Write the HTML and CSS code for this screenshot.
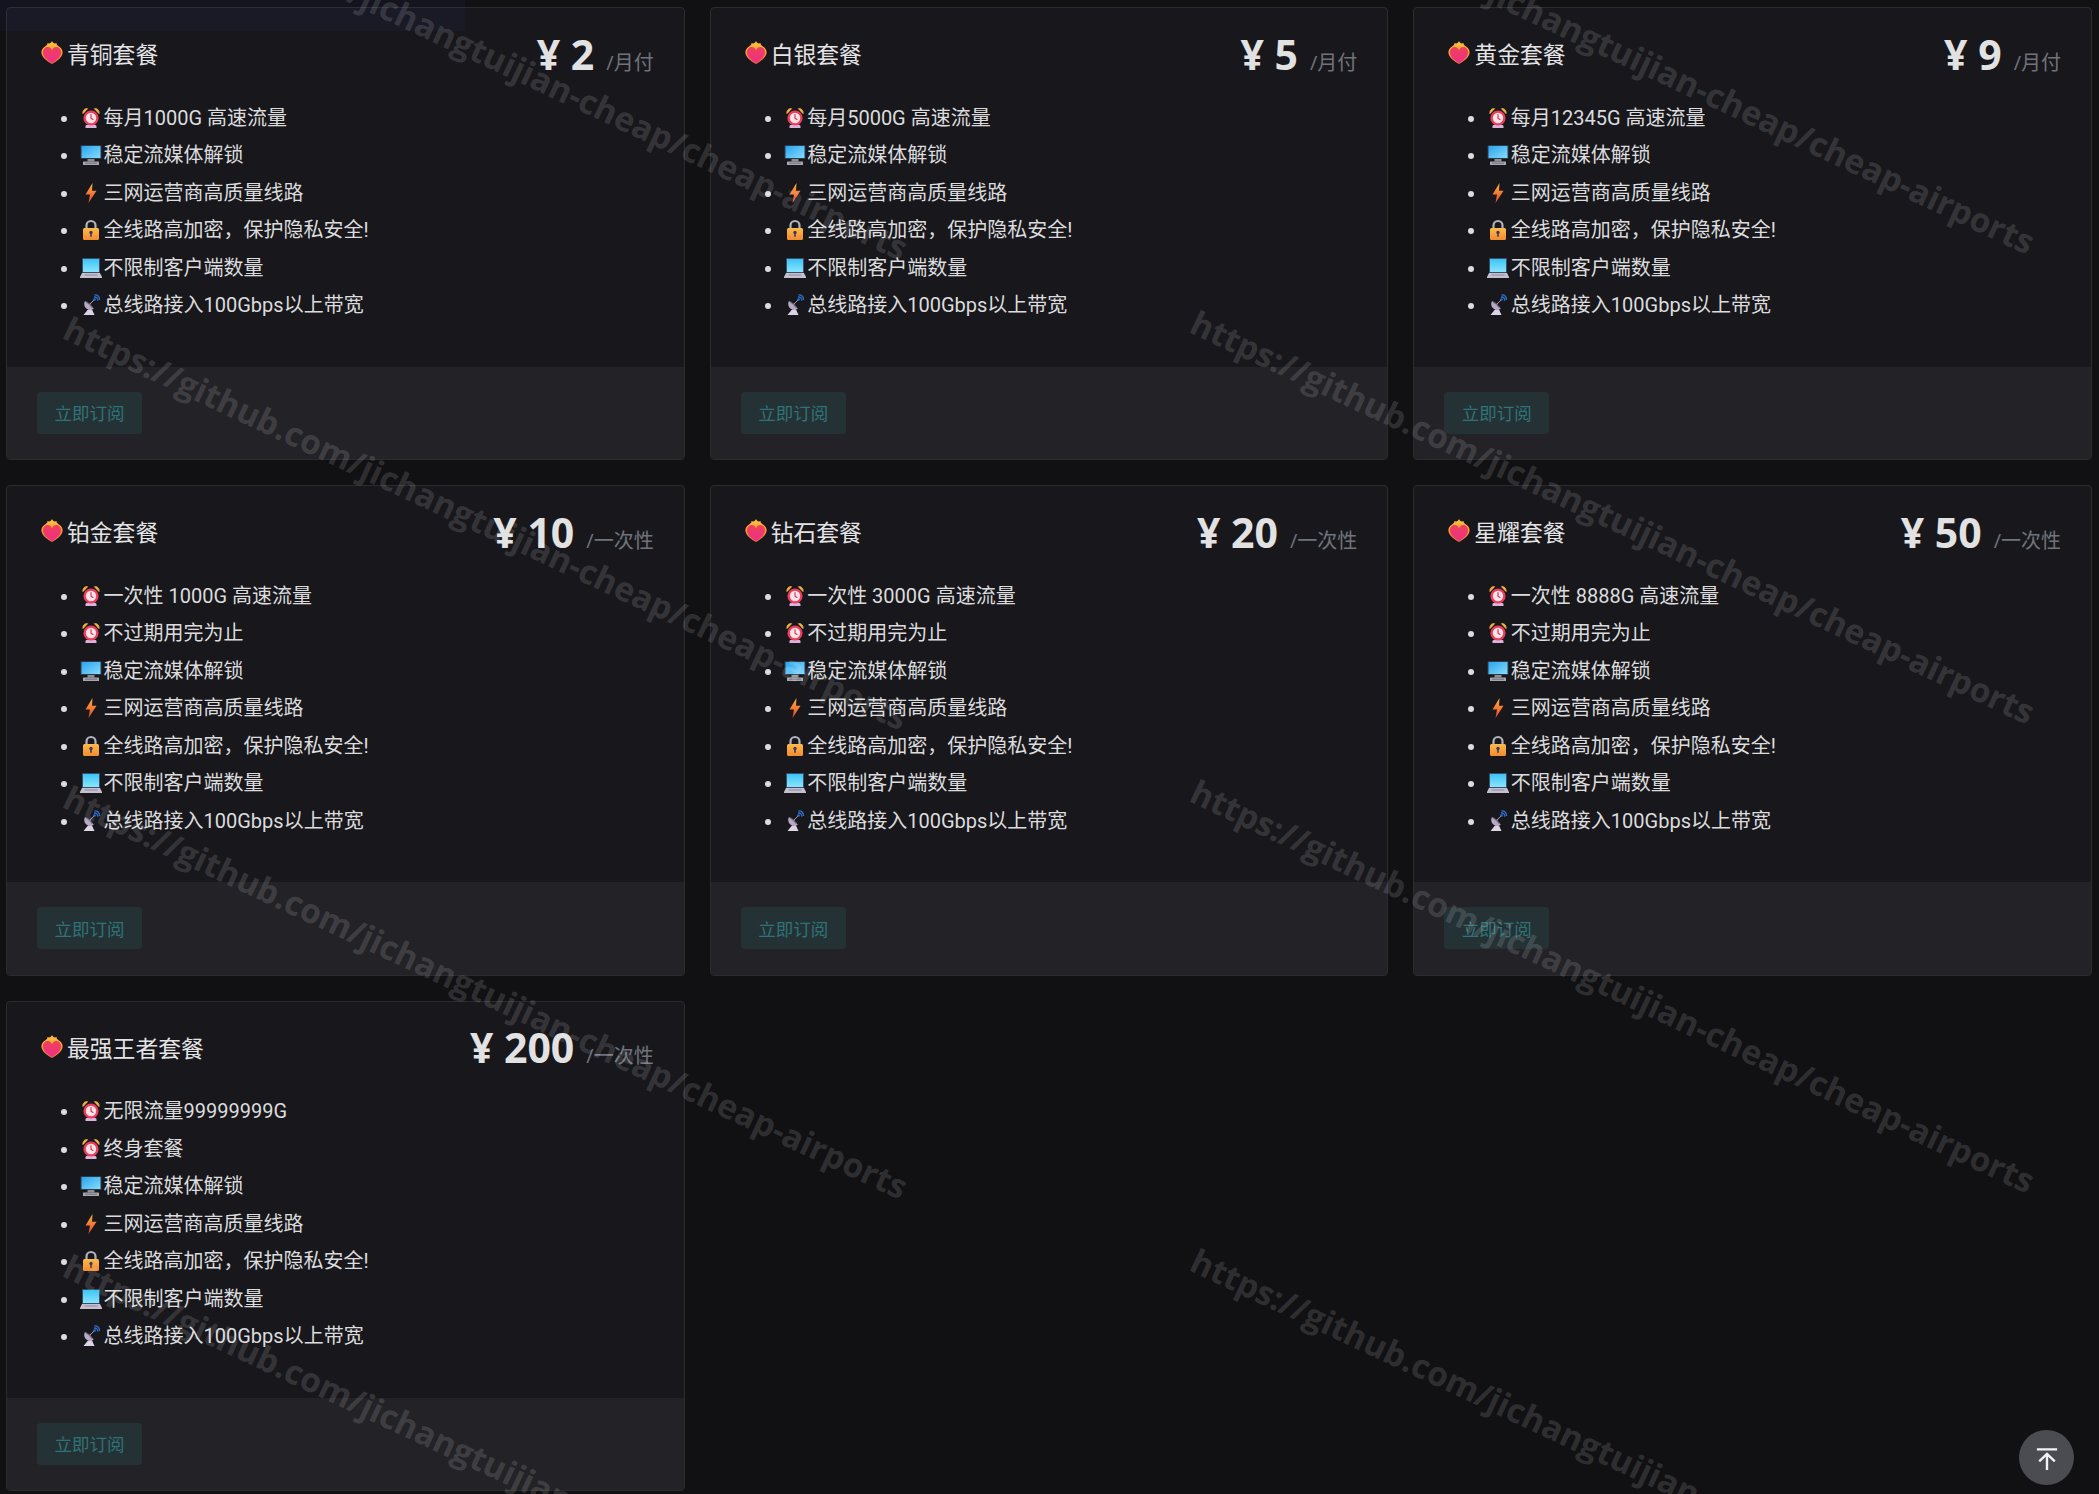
FILE: index.html
```html
<!DOCTYPE html>
<html lang="zh-CN">
<head>
<meta charset="utf-8">
<title>套餐</title>
<link rel="stylesheet" href="styles.css">
</head>
<body>
<svg class="defs" aria-hidden="true">
  <defs>
    <linearGradient id="gHeart" x1="0" y1="0" x2="0" y2="1"><stop offset="0" stop-color="#f0405a"/><stop offset="1" stop-color="#ee2f8a"/></linearGradient>
    <linearGradient id="gFlame" x1="0" y1="0" x2="0" y2="1"><stop offset="0" stop-color="#fdc63f"/><stop offset="1" stop-color="#f2702c"/></linearGradient>
    <linearGradient id="gScreen" x1="0" y1="0" x2="1" y2="1"><stop offset="0" stop-color="#2aa3ee"/><stop offset="1" stop-color="#86dcfb"/></linearGradient>
    <linearGradient id="gLaptop" x1="0" y1="0" x2="0" y2="1"><stop offset="0" stop-color="#3cc4f7"/><stop offset="1" stop-color="#8ae4fc"/></linearGradient>
    <linearGradient id="gBolt" x1="0" y1="0" x2="0" y2="1"><stop offset="0" stop-color="#ffb13c"/><stop offset="1" stop-color="#e8452c"/></linearGradient>
    <linearGradient id="gLock" x1="0" y1="0" x2="0" y2="1"><stop offset="0" stop-color="#fdbb4a"/><stop offset="1" stop-color="#f58a2e"/></linearGradient>
    <symbol id="i-heart" viewBox="0 0 22 25">
      <path d="M11 1C11.800 3 13.500 4 15.500 3C15.500 4.800 16.500 5.500 18 6.500C21 8.500 22 11 21.500 13.500C20.500 18 15.500 21.500 11 24C6.500 21.500 1.500 18 .5 13.500C0 11 1 8.500 4 6.500C5.500 5.500 6.500 4.800 6.500 3C8.500 4 10.200 3 11 1z" fill="url(#gFlame)"/>
      <path d="M11 23C6.300 20.300 2 16.800 2 12.300C2 9 4.300 7 6.800 7C8.700 7 10.200 8.200 11 10.300C11.800 8.200 13.300 7 15.200 7C17.700 7 20 9 20 12.300C20 16.800 15.700 20.300 11 23z" fill="url(#gHeart)"/>
    </symbol>
    <symbol id="i-alarm" viewBox="0 0 22 22">
      <path d="M3 6.500C2.600 3.500 4.700 1.200 7.500 1.700L3 6.500zM19 6.500c.4-3-1.700-5.300-4.500-4.800L19 6.500z" fill="#f5b942" stroke="#f5b942" stroke-width="1"/>
      <path d="M5.500 21v-1.500c0-1 .8-1.700 1.700-1.700h7.600c.9 0 1.700.7 1.700 1.700V21z" fill="#d8b4dc"/>
      <circle cx="11" cy="11" r="7.600" fill="#ee3c5c"/>
      <circle cx="11" cy="11" r="5.200" fill="#fde2e6"/>
      <path d="M11 7.500V11.300L13 12.500" fill="none" stroke="#c8324f" stroke-width="1.100" stroke-linecap="round"/>
    </symbol>
    <symbol id="i-desktop" viewBox="0 0 22 22">
      <rect x="0.500" y="1" width="21" height="14" rx="1" fill="#2b3a4a"/>
      <rect x="1.500" y="2" width="19" height="12" fill="url(#gScreen)"/>
      <rect x="7.500" y="15" width="7" height="2.500" fill="#8d8d96"/>
      <rect x="3" y="17.500" width="16" height="3.500" rx=".6" fill="#a8a8b2"/>
      <path d="M5 19.200h12" stroke="#6e6e78" stroke-width="1"/>
    </symbol>
    <symbol id="i-bolt" viewBox="0 0 22 22">
      <path d="M12.500 1L5.500 12.500H10L8.500 21 16.500 8.800H12z" fill="url(#gBolt)"/>
    </symbol>
    <symbol id="i-lock" viewBox="0 0 22 22">
      <path d="M6.500 10V6.500a4.500 4.500 0 0 1 9 0V10" fill="none" stroke="#b2b2bc" stroke-width="2.200"/>
      <rect x="3" y="9" width="16" height="12" rx="1.500" fill="url(#gLock)"/>
      <circle cx="11" cy="13.500" r="1.700" fill="#3b3a6e"/>
      <rect x="10.200" y="13.500" width="1.600" height="4.300" fill="#3b3a6e"/>
    </symbol>
    <symbol id="i-laptop" viewBox="0 0 22 22">
      <rect x="2" y="1" width="18" height="15" rx="1" fill="#39506a"/>
      <rect x="3" y="2" width="16" height="13" fill="url(#gLaptop)"/>
      <path d="M2 16h18l2 4v1H0v-1z" fill="#c5c0d0"/>
      <path d="M4.500 18h13" stroke="#8f8b9d" stroke-width="1"/>
    </symbol>
    <symbol id="i-sat" viewBox="0 0 22 22">
      <path d="M5 7c-1.500 2.700-.7 6 1.700 7.700 2.400 1.700 5.400 1.300 7.100-.5z" fill="#b9a8c6"/>
      <path d="M6 7.800c2 .8 5 3.700 6.400 5.900" stroke="#6f6579" stroke-width="1.200" fill="none"/>
      <path d="M9.500 10.500l4.500-4.500" stroke="#a99cb4" stroke-width="1"/>
      <path d="M8 15.500l-4.500 5.500h11l-2.500-5.500z" fill="#ded2e5"/>
      <path d="M14 3c2.500-.2 4 1.300 3.800 3.800M14.500 1c3-.4 5.400 2 5 5" fill="none" stroke="#2f6fd0" stroke-width="1.300"/>
      <circle cx="14.500" cy="5.500" r="1.300" fill="#2f6fd0"/>
    </symbol>
  </defs>
</svg>

<main class="plans">

  <article class="card">
    <header class="head">
      <h2 class="title"><svg class="hot"><use href="#i-heart"/></svg>青铜套餐</h2>
      <div class="price">¥ 2<span class="per">/月付</span></div>
    </header>
    <ul class="feats">
      <li><svg class="ico"><use href="#i-alarm"/></svg>每月1000G 高速流量</li>
      <li><svg class="ico"><use href="#i-desktop"/></svg>稳定流媒体解锁</li>
      <li><svg class="ico"><use href="#i-bolt"/></svg>三网运营商高质量线路</li>
      <li><svg class="ico"><use href="#i-lock"/></svg>全线路高加密，保护隐私安全!</li>
      <li><svg class="ico"><use href="#i-laptop"/></svg>不限制客户端数量</li>
      <li><svg class="ico"><use href="#i-sat"/></svg>总线路接入100Gbps以上带宽</li>
    </ul>
    <footer class="foot"><button class="buy">立即订阅</button></footer>
  </article>

  <article class="card">
    <header class="head">
      <h2 class="title"><svg class="hot"><use href="#i-heart"/></svg>白银套餐</h2>
      <div class="price">¥ 5<span class="per">/月付</span></div>
    </header>
    <ul class="feats">
      <li><svg class="ico"><use href="#i-alarm"/></svg>每月5000G 高速流量</li>
      <li><svg class="ico"><use href="#i-desktop"/></svg>稳定流媒体解锁</li>
      <li><svg class="ico"><use href="#i-bolt"/></svg>三网运营商高质量线路</li>
      <li><svg class="ico"><use href="#i-lock"/></svg>全线路高加密，保护隐私安全!</li>
      <li><svg class="ico"><use href="#i-laptop"/></svg>不限制客户端数量</li>
      <li><svg class="ico"><use href="#i-sat"/></svg>总线路接入100Gbps以上带宽</li>
    </ul>
    <footer class="foot"><button class="buy">立即订阅</button></footer>
  </article>

  <article class="card">
    <header class="head">
      <h2 class="title"><svg class="hot"><use href="#i-heart"/></svg>黄金套餐</h2>
      <div class="price">¥ 9<span class="per">/月付</span></div>
    </header>
    <ul class="feats">
      <li><svg class="ico"><use href="#i-alarm"/></svg>每月12345G 高速流量</li>
      <li><svg class="ico"><use href="#i-desktop"/></svg>稳定流媒体解锁</li>
      <li><svg class="ico"><use href="#i-bolt"/></svg>三网运营商高质量线路</li>
      <li><svg class="ico"><use href="#i-lock"/></svg>全线路高加密，保护隐私安全!</li>
      <li><svg class="ico"><use href="#i-laptop"/></svg>不限制客户端数量</li>
      <li><svg class="ico"><use href="#i-sat"/></svg>总线路接入100Gbps以上带宽</li>
    </ul>
    <footer class="foot"><button class="buy">立即订阅</button></footer>
  </article>

  <article class="card">
    <header class="head">
      <h2 class="title"><svg class="hot"><use href="#i-heart"/></svg>铂金套餐</h2>
      <div class="price">¥ 10<span class="per">/一次性</span></div>
    </header>
    <ul class="feats">
      <li><svg class="ico"><use href="#i-alarm"/></svg>一次性 1000G 高速流量</li>
      <li><svg class="ico"><use href="#i-alarm"/></svg>不过期用完为止</li>
      <li><svg class="ico"><use href="#i-desktop"/></svg>稳定流媒体解锁</li>
      <li><svg class="ico"><use href="#i-bolt"/></svg>三网运营商高质量线路</li>
      <li><svg class="ico"><use href="#i-lock"/></svg>全线路高加密，保护隐私安全!</li>
      <li><svg class="ico"><use href="#i-laptop"/></svg>不限制客户端数量</li>
      <li><svg class="ico"><use href="#i-sat"/></svg>总线路接入100Gbps以上带宽</li>
    </ul>
    <footer class="foot"><button class="buy">立即订阅</button></footer>
  </article>

  <article class="card">
    <header class="head">
      <h2 class="title"><svg class="hot"><use href="#i-heart"/></svg>钻石套餐</h2>
      <div class="price">¥ 20<span class="per">/一次性</span></div>
    </header>
    <ul class="feats">
      <li><svg class="ico"><use href="#i-alarm"/></svg>一次性 3000G 高速流量</li>
      <li><svg class="ico"><use href="#i-alarm"/></svg>不过期用完为止</li>
      <li><svg class="ico"><use href="#i-desktop"/></svg>稳定流媒体解锁</li>
      <li><svg class="ico"><use href="#i-bolt"/></svg>三网运营商高质量线路</li>
      <li><svg class="ico"><use href="#i-lock"/></svg>全线路高加密，保护隐私安全!</li>
      <li><svg class="ico"><use href="#i-laptop"/></svg>不限制客户端数量</li>
      <li><svg class="ico"><use href="#i-sat"/></svg>总线路接入100Gbps以上带宽</li>
    </ul>
    <footer class="foot"><button class="buy">立即订阅</button></footer>
  </article>

  <article class="card">
    <header class="head">
      <h2 class="title"><svg class="hot"><use href="#i-heart"/></svg>星耀套餐</h2>
      <div class="price">¥ 50<span class="per">/一次性</span></div>
    </header>
    <ul class="feats">
      <li><svg class="ico"><use href="#i-alarm"/></svg>一次性 8888G 高速流量</li>
      <li><svg class="ico"><use href="#i-alarm"/></svg>不过期用完为止</li>
      <li><svg class="ico"><use href="#i-desktop"/></svg>稳定流媒体解锁</li>
      <li><svg class="ico"><use href="#i-bolt"/></svg>三网运营商高质量线路</li>
      <li><svg class="ico"><use href="#i-lock"/></svg>全线路高加密，保护隐私安全!</li>
      <li><svg class="ico"><use href="#i-laptop"/></svg>不限制客户端数量</li>
      <li><svg class="ico"><use href="#i-sat"/></svg>总线路接入100Gbps以上带宽</li>
    </ul>
    <footer class="foot"><button class="buy">立即订阅</button></footer>
  </article>

  <article class="card">
    <header class="head">
      <h2 class="title"><svg class="hot"><use href="#i-heart"/></svg>最强王者套餐</h2>
      <div class="price">¥ 200<span class="per">/一次性</span></div>
    </header>
    <ul class="feats">
      <li><svg class="ico"><use href="#i-alarm"/></svg>无限流量99999999G</li>
      <li><svg class="ico"><use href="#i-alarm"/></svg>终身套餐</li>
      <li><svg class="ico"><use href="#i-desktop"/></svg>稳定流媒体解锁</li>
      <li><svg class="ico"><use href="#i-bolt"/></svg>三网运营商高质量线路</li>
      <li><svg class="ico"><use href="#i-lock"/></svg>全线路高加密，保护隐私安全!</li>
      <li><svg class="ico"><use href="#i-laptop"/></svg>不限制客户端数量</li>
      <li><svg class="ico"><use href="#i-sat"/></svg>总线路接入100Gbps以上带宽</li>
    </ul>
    <footer class="foot"><button class="buy">立即订阅</button></footer>
  </article>

</main>

<div class="strip"></div>

<div class="marks" aria-hidden="true">
  <span class="mark m1">https://github.com/jichangtuijian-cheap/cheap-airports</span>
  <span class="mark m2">https://github.com/jichangtuijian-cheap/cheap-airports</span>
  <span class="mark m3">https://github.com/jichangtuijian-cheap/cheap-airports</span>
  <span class="mark m4">https://github.com/jichangtuijian-cheap/cheap-airports</span>
  <span class="mark m5">https://github.com/jichangtuijian-cheap/cheap-airports</span>
  <span class="mark m6">https://github.com/jichangtuijian-cheap/cheap-airports</span>
  <span class="mark m7">https://github.com/jichangtuijian-cheap/cheap-airports</span>
  <span class="mark m8">https://github.com/jichangtuijian-cheap/cheap-airports</span>
</div>

<button class="top" aria-label="返回顶部">
  <svg class="top-ico" viewBox="0 0 24 24"><path d="M1 1.500h22M12 24V6.500M3.500 14.500L12 6.500l8.500 8" fill="none" stroke="#f2f2f2" stroke-width="2.600"/></svg>
</button>
</body>
</html>
```

FILE: styles.css
```css
* { box-sizing: border-box; }
html, body { margin: 0; height: 1494px; overflow: hidden; }
body {
  background: #111113;
  color: #dedee0;
  font-family: Roboto, "Noto Sans CJK SC", sans-serif;
  font-size: 20px;
}
.defs { position: absolute; width: 0; height: 0; }

.plans {
  display: grid;
  grid-template-columns: repeat(3, 1fr);
  align-items: start;
  gap: 25px;
  padding: 7px 7px 0 6px;
}
.card {
  display: flex;
  flex-direction: column;
  background: #18181c;
  border: 1px solid #2c2c30;
  border-radius: 4px;
  overflow: hidden;
}
.head {
  display: flex;
  justify-content: space-between;
  align-items: center;
  height: 48px;
  margin-top: 21px;
  padding: 0 30px 0 34px;
}
.title {
  display: flex;
  align-items: center;
  margin: 1px 0 0;
  font-size: 22.8px;
  font-weight: 400;
  color: #e4e4e6;
}
.hot { width: 22px; height: 25px; margin: -2px 4px 0 0; }
.price {
  margin-top: 10px;
  font-family: "Open Sans", "Noto Sans CJK SC", sans-serif;
  font-size: 41px;
  font-weight: 700;
  line-height: 48px;
  color: #e2e2e2;
}
.per {
  margin-left: 12px;
  font-size: 20px;
  font-weight: 400;
  color: #70737b;
}
.feats {
  margin: 22.5px 0 42px;
  padding: 0 0 0 73px;
  color: #dcdcde;
}
.feats li { height: 37.5px; line-height: 37.5px; }
.ico {
  width: 22px;
  height: 22px;
  margin-right: 1.5px;
  vertical-align: -4px;
}
.foot {
  display: flex;
  padding: 25px 30px 25.5px;
  background: #232327;
}
.buy {
  width: 105px;
  height: 42px;
  padding: 0;
  border: 0;
  border-radius: 4px;
  background: #243236;
  color: #2f7377;
  font: inherit;
  font-size: 17.5px;
}

.strip {
  position: absolute;
  top: 0;
  left: 0;
  width: 465px;
  height: 31px;
  background: rgba(70, 70, 220, 0.06);
}

.marks {
  position: absolute;
  inset: 0;
  overflow: hidden;
  pointer-events: none;
}
.mark {
  position: absolute;
  font-family: "Open Sans", sans-serif;
  font-size: 33.4px;
  font-weight: 700;
  line-height: 1;
  white-space: nowrap;
  color: rgba(255, 255, 255, 0.14);
  transform: rotate(25.1deg);
  transform-origin: 0 50%;
}
.m1 { left: 66px; top: -160px; }
.m2 { left: 66px; top: 310px; }
.m3 { left: 66px; top: 779px; }
.m4 { left: 66px; top: 1248px; }
.m5 { left: 1193px; top: -166px; }
.m6 { left: 1193px; top: 304px; }
.m7 { left: 1193px; top: 773px; }
.m8 { left: 1193px; top: 1242px; }

.top {
  position: fixed;
  left: 2019px;
  top: 1430px;
  display: flex;
  align-items: center;
  justify-content: center;
  width: 55px;
  height: 55px;
  padding: 2px 0 0;
  border: 0;
  border-radius: 50%;
  background: #4b4c52;
}
.top-ico { width: 22px; height: 24px; }
```
